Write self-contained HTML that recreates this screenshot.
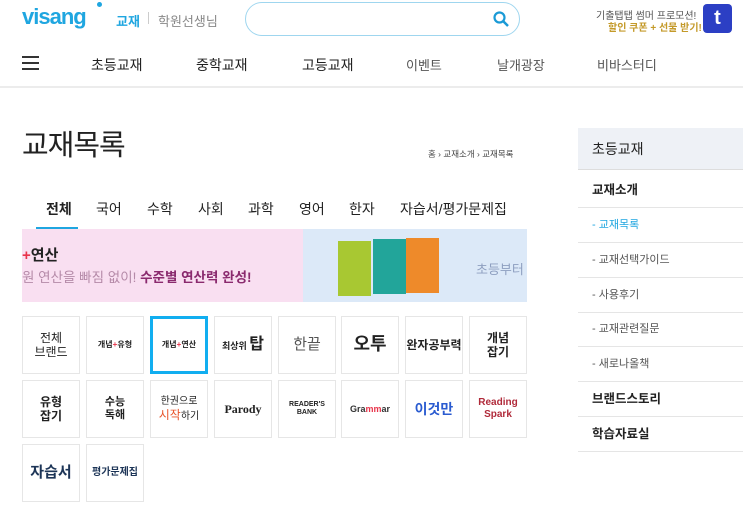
<!DOCTYPE html>
<html><head><meta charset="utf-8"><style>
*{margin:0;padding:0;box-sizing:border-box}
body{width:743px;height:524px;overflow:hidden;background:#fff;font-family:"Liberation Sans","Noto Sans CJK KR",sans-serif;color:#222;position:relative}
.a{position:absolute;white-space:nowrap}
.cell{position:absolute;width:58px;height:58px;border:1px solid #e6e6e6;display:flex;align-items:center;justify-content:center;text-align:center;font-weight:bold;font-size:10px;line-height:1.2;color:#222}
.side div.it{position:absolute;left:578px;width:165px;height:35px;border-bottom:1px solid #e5e5e5;padding-left:14px;line-height:34px;font-size:12.5px}
</style></head><body>
<div class="a" style="left:22px;top:4px;font-size:22px;font-weight:bold;color:#1fa6e0;letter-spacing:-1px">visang</div>
<div class="a" style="left:97px;top:2px;width:5px;height:5px;border-radius:50%;background:#1fa6e0"></div>
<div class="a" style="left:116px;top:11px;font-size:13px;color:#1fa6e0;font-weight:bold">교재</div>
<div class="a" style="left:148px;top:12px;width:1px;height:12px;background:#ccc"></div>
<div class="a" style="left:158px;top:11px;font-size:13px;color:#888">학원선생님</div>
<div class="a" style="left:245px;top:2px;width:275px;height:34px;border:1px solid #9fd6ef;border-radius:17px"></div>
<svg class="a" style="left:492px;top:10px" width="18" height="18" viewBox="0 0 18 18"><circle cx="7.5" cy="7.5" r="5" fill="none" stroke="#1a9ad6" stroke-width="2.2"/><path d="M11 11l5 5" stroke="#1a9ad6" stroke-width="2.5"/></svg>
<div class="a" style="left:596px;top:7px;font-size:10px;color:#555">기출탭탭 썸머 프로모션!</div>
<div class="a" style="left:608px;top:19px;font-size:10px;color:#c49a2a;font-weight:bold">할인 쿠폰 + 선물 받기!</div>
<div class="a" style="left:703px;top:4px;width:29px;height:29px;border-radius:4px;background:#2c3fc4;color:#fff;font-size:20px;font-weight:bold;text-align:center;line-height:28px">t</div>
<div class="a" style="left:22px;top:56px;width:17px;height:2px;background:#333;box-shadow:0 6px 0 #333,0 12px 0 #333"></div>
<div class="a" style="top:55px;left:91px;font-size:14px;color:#222">초등교재</div>
<div class="a" style="top:55px;left:196px;font-size:14px;color:#222">중학교재</div>
<div class="a" style="top:55px;left:302px;font-size:14px;color:#222">고등교재</div>
<div class="a" style="top:55px;left:406px;font-size:13px;color:#555">이벤트</div>
<div class="a" style="top:55px;left:497px;font-size:13px;color:#555">날개광장</div>
<div class="a" style="top:55px;left:597px;font-size:13px;color:#555">비바스터디</div>
<div class="a" style="left:0;top:86px;width:743px;height:2px;background:#ececec"></div>
<div class="a" style="left:22px;top:122px;font-size:29px;color:#222;letter-spacing:-1px">교재목록</div>
<div class="a" style="left:428px;top:148px;font-size:8.5px;color:#444">홈 › 교재소개 › 교재목록</div>
<div class="a" style="left:46px;top:199px;font-size:14px;font-weight:bold">전체</div>
<div class="a" style="left:36px;top:227px;width:42px;height:2px;background:#1fa6e0"></div>
<div class="a" style="left:96px;top:199px;font-size:14px">국어</div>
<div class="a" style="left:147px;top:199px;font-size:14px">수학</div>
<div class="a" style="left:198px;top:199px;font-size:14px">사회</div>
<div class="a" style="left:248px;top:199px;font-size:14px">과학</div>
<div class="a" style="left:299px;top:199px;font-size:14px">영어</div>
<div class="a" style="left:349px;top:199px;font-size:14px">한자</div>
<div class="a" style="left:400px;top:199px;font-size:14px">자습서/평가문제집</div>
<div class="a" style="left:22px;top:229px;width:281px;height:73px;background:#f9dff1;overflow:hidden">
<div class="a" style="left:0;top:15px;font-size:15px;font-weight:bold;color:#222"><span style="color:#e8344a">+</span>연산</div>
<div class="a" style="left:0;top:37px;font-size:13.5px;color:#b58aa8">원 연산을 빠짐 없이! <b style="color:#8a2a6e">수준별 연산력 완성!</b></div></div>
<div class="a" style="left:303px;top:229px;width:224px;height:73px;background:#dce9f8">
<div class="a" style="left:35px;top:12px;width:33px;height:55px;background:#a8c832"></div>
<div class="a" style="left:70px;top:10px;width:33px;height:55px;background:#22a59a"></div>
<div class="a" style="left:103px;top:9px;width:33px;height:55px;background:#ee8a2a"></div>
<div class="a" style="left:173px;top:30px;font-size:13px;color:#8e9fc0">초등부터</div></div>
<div class="cell" style="left:22px;top:316px;font-weight:normal;font-size:12px"><div>전체<br>브랜드</div></div>
<div class="cell" style="left:86px;top:316px;font-size:8px"><div>개념<span style="color:#e8344a">+</span>유형</div></div>
<div class="cell" style="left:150px;top:316px;border:3px solid #11aef0;font-size:8px"><div>개념<span style="color:#e8344a">+</span>연산</div></div>
<div class="cell" style="left:214px;top:316px;font-size:9px"><div>최상위 <span style="font-size:16px">탑</span></div></div>
<div class="cell" style="left:278px;top:316px;font-weight:normal;font-size:15px;color:#555">한끝</div>
<div class="cell" style="left:341px;top:316px;font-size:18px">오투</div>
<div class="cell" style="left:405px;top:316px;font-size:12px">완자공부력</div>
<div class="cell" style="left:469px;top:316px;font-size:12px"><div>개념<br>잡기</div></div>
<div class="cell" style="left:22px;top:380px;font-size:12px"><div>유형<br>잡기</div></div>
<div class="cell" style="left:86px;top:380px;font-size:11px"><div>수능<br>독해</div></div>
<div class="cell" style="left:150px;top:380px;font-weight:normal;font-size:10px"><div>한권으로<br><span style="color:#e8542a;font-size:12px">시작</span>하기</div></div>
<div class="cell" style="left:214px;top:380px;font-family:'Liberation Serif',serif;font-size:12px">Parody</div>
<div class="cell" style="left:278px;top:380px;font-size:7px"><div>READER'S<br>BANK</div></div>
<div class="cell" style="left:341px;top:380px;font-size:9px;color:#333"><div>Gra<span style="color:#e8344a">mm</span>ar</div></div>
<div class="cell" style="left:405px;top:380px;font-size:14px;color:#2a5bd0">이것만</div>
<div class="cell" style="left:469px;top:380px;font-size:10px;color:#b02a3a"><div>Reading<br>Spark</div></div>
<div class="cell" style="left:22px;top:444px;font-size:15px;color:#1d3557">자습서</div>
<div class="cell" style="left:86px;top:444px;font-size:10px;color:#1d3557">평가문제집</div>
<div class="side">
<div class="a" style="left:578px;top:128px;width:165px;height:42px;background:#eef1f6;border-bottom:1px solid #ddd;padding-left:14px;line-height:42px;font-size:14px">초등교재</div>
<div class="it" style="top:173px;font-weight:bold">교재소개</div>
<div class="it" style="top:208px;color:#1fa6e0;font-size:11px">- 교재목록</div>
<div class="it" style="top:243px;color:#555;font-size:11px">- 교재선택가이드</div>
<div class="it" style="top:278px;color:#555;font-size:11px">- 사용후기</div>
<div class="it" style="top:312px;color:#555;font-size:11px">- 교재관련질문</div>
<div class="it" style="top:347px;color:#555;font-size:11px">- 새로나올책</div>
<div class="it" style="top:382px;font-weight:bold">브랜드스토리</div>
<div class="it" style="top:417px;font-weight:bold">학습자료실</div>
</div>
</body></html>
